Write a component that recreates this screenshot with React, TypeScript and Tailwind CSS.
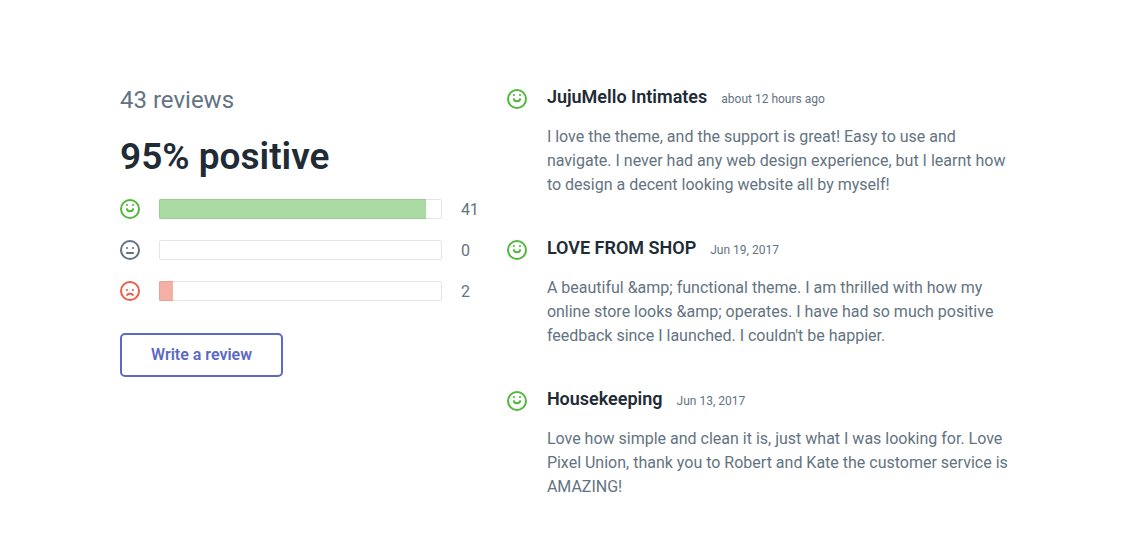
type Mood = 'positive' | 'neutral' | 'negative';

interface Rating {
  mood: Mood;
  label: string;
  count: number;
}

interface Review {
  author: string;
  date: string;
  text: string;
}

const ratings: Rating[] = [
  { mood: 'positive', label: 'Positive reviews', count: 41 },
  { mood: 'neutral', label: 'Neutral reviews', count: 0 },
  { mood: 'negative', label: 'Negative reviews', count: 2 },
];

const total = ratings.reduce((sum, rating) => sum + rating.count, 0);

const reviews: Review[] = [
  {
    author: 'JujuMello Intimates',
    date: 'about 12 hours ago',
    text: 'I love the theme, and the support is great! Easy to use and navigate. I never had any web design experience, but I learnt how to design a decent looking website all by myself!',
  },
  {
    author: 'LOVE FROM SHOP',
    date: 'Jun 19, 2017',
    text: "A beautiful &amp; functional theme. I am thrilled with how my online store looks &amp; operates. I have had so much positive feedback since I launched. I couldn't be happier.",
  },
  {
    author: 'Housekeeping',
    date: 'Jun 13, 2017',
    text: 'Love how simple and clean it is, just what I was looking for. Love Pixel Union, thank you to Robert and Kate the customer service is AMAZING!',
  },
];

const moodColor: Record<Mood, string> = {
  positive: 'text-[#50b83c]',
  neutral: 'text-[#637381]',
  negative: 'text-[#ec5e47]',
};

const barColor: Record<Mood, string> = {
  positive: 'bg-[#a9dba3] border-[#96cf90]',
  neutral: 'bg-[#c4cdd5] border-[#b4bdc5]',
  negative: 'bg-[#f5b0a6] border-[#eb9f95]',
};

const mouth: Record<Mood, string> = {
  positive: 'M6.7 9.3c.3 1.9 1.5 3 3.3 3s3-1.1 3.3-3',
  neutral: 'M6.2 13h7.6',
  negative: 'M6.6 14.6c.7-1.3 1.9-1.9 3.4-1.9s2.7.6 3.4 1.9',
};

function Face({ mood }: { mood: Mood }) {
  const eyes = mood === 'positive' ? 6 : mood === 'neutral' ? 8 : 9;
  return (
    <svg viewBox="0 0 20 20" className={`size-5 shrink-0 ${moodColor[mood]}`} fill="none" aria-hidden="true">
      <circle cx="10" cy="10" r="9" stroke="currentColor" strokeWidth="2" />
      <circle cx="7" cy={eyes} r="1.05" fill="currentColor" />
      <circle cx="13" cy={eyes} r="1.05" fill="currentColor" />
      <path d={mouth[mood]} stroke="currentColor" strokeWidth="2" />
    </svg>
  );
}

function RatingRow({ mood, label, count }: Rating) {
  const percent = Math.round((count / total) * 100);
  return (
    <li className="flex h-5 items-center gap-[19px]" aria-label={label}>
      <Face mood={mood} />
      <div className="relative h-5 flex-1 rounded-xs border border-[#e3e5e7]">
        {count > 0 && (
          <div
            className={`absolute -inset-y-px -left-px rounded-l-xs border border-r-0 ${barColor[mood]}`}
            style={{ width: `${percent}%` }}
          />
        )}
      </div>
      <span className="w-4 pt-px">{count}</span>
    </li>
  );
}

function ReviewItem({ author, date, text }: Review) {
  return (
    <li className="flex gap-5">
      <div className="pt-1">
        <Face mood="positive" />
      </div>
      <div className="pr-2">
        <div className="flex items-baseline gap-[14px]">
          <h3 className="text-lg leading-6 font-semibold text-[#212b35]">{author}</h3>
          <span className="text-xs">{date}</span>
        </div>
        <p className="mt-4 leading-6">{text}</p>
      </div>
    </li>
  );
}

export default function App() {
  return (
    <section className="grid min-h-screen grid-cols-[11fr_16fr] items-start gap-[30px] bg-white pt-[85px] pr-[95px] pb-10 pl-[120px] font-[Roboto,sans-serif] text-base text-[#637381]">
      <div>
        <p className="text-2xl leading-[30px]">43 reviews</p>
        <h2 className="mt-[18px] text-[37px] leading-12 font-semibold text-[#212b35]">95% positive</h2>
        <ul className="mt-[18px] flex flex-col gap-[21px]">
          {ratings.map((rating) => (
            <RatingRow key={rating.mood} {...rating} />
          ))}
        </ul>
        <button
          type="button"
          className="mt-8 h-11 rounded-[5px] border-2 border-[#5c6ac4] px-[29px] font-semibold text-[#5c6ac4] hover:bg-[#5c6ac4]/5"
        >
          Write a review
        </button>
      </div>

      <ul className="flex flex-col gap-[39px]">
        {reviews.map((review) => (
          <ReviewItem key={review.author} {...review} />
        ))}
      </ul>
    </section>
  );
}
